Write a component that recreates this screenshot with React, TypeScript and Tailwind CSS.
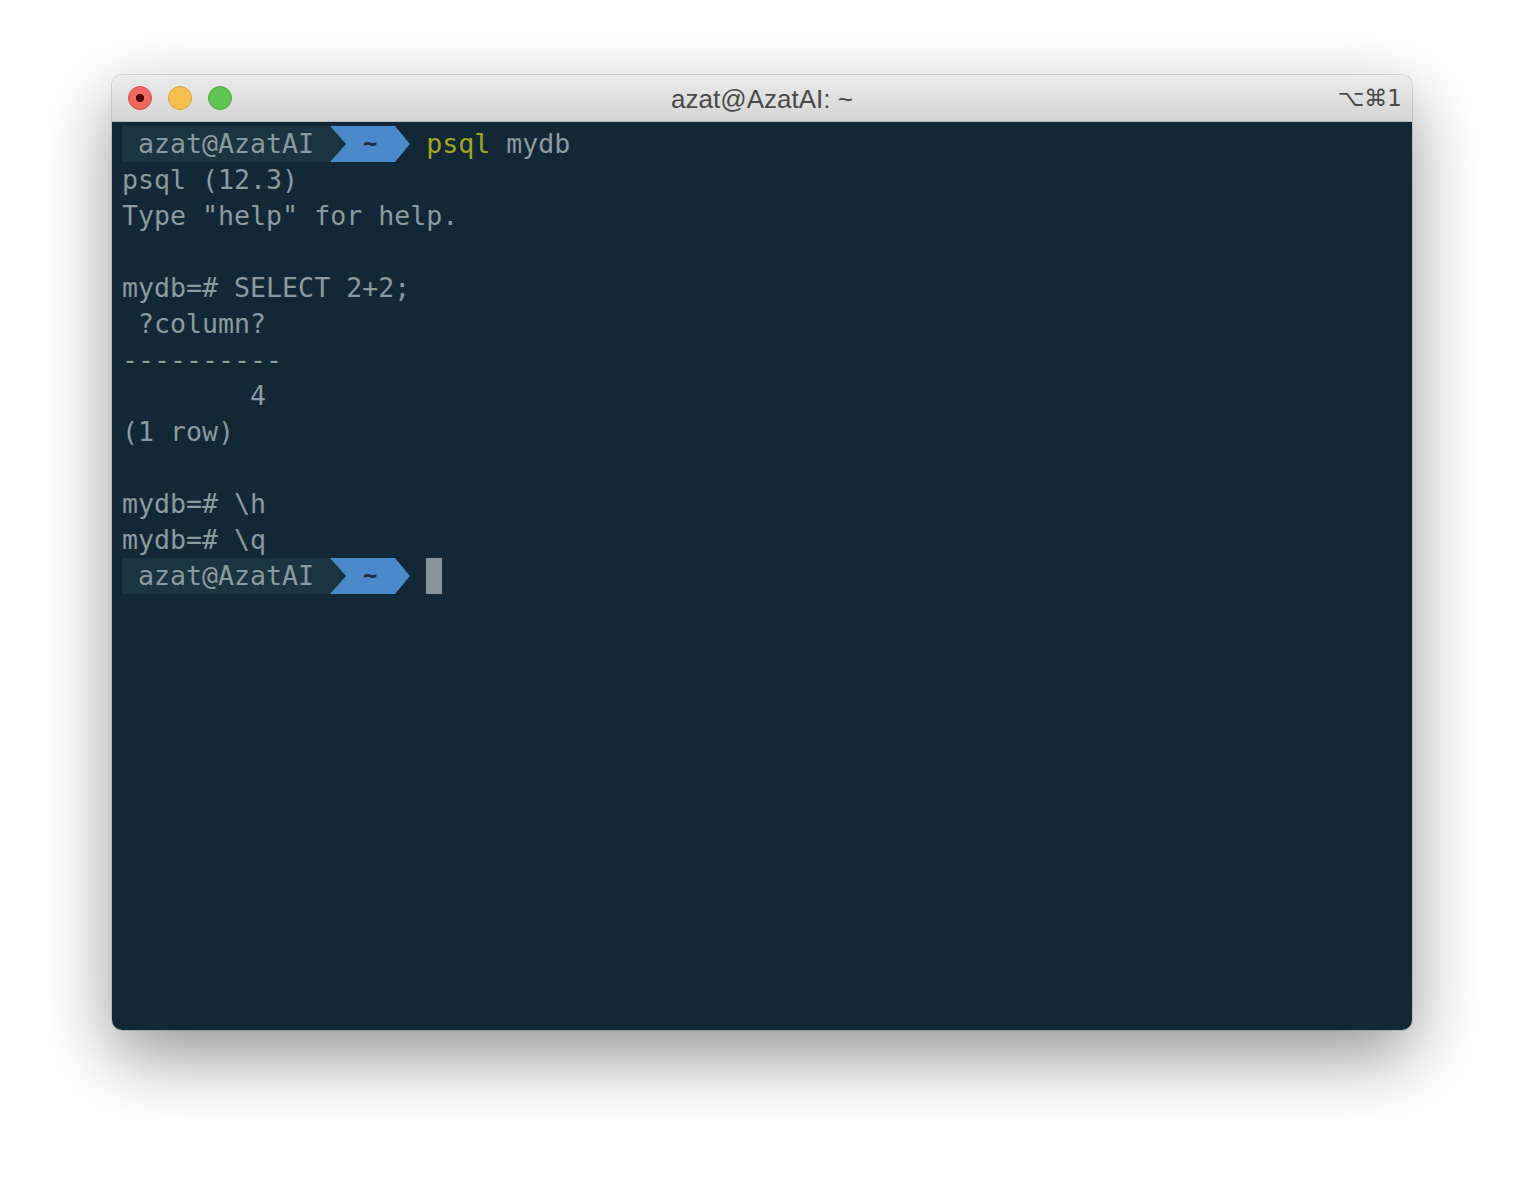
import React from "react";

const mono = { fontFamily: '"DejaVu Sans Mono", "Liberation Mono", monospace' };

function Prompt({ children }: { children?: React.ReactNode }) {
  return (
    <div className="flex h-[36px] items-center">
      <div className="flex h-[36px] items-center bg-[#1b3442] whitespace-pre text-[#8b9a9e]">{" azat@AzatAI "}</div>
      <div className="relative h-[36px] w-[80px]">
        <svg width="80" height="36" viewBox="0 0 80 36" className="absolute left-0 top-0">
          <polygon points="0,0 16,18 0,36" fill="#1b3442" />
          <polygon points="0,0 65,0 80,18 65,36 0,36 16,18" fill="#4a8acb" />
        </svg>
        <span className="absolute left-0 top-0 flex h-[36px] w-[80px] items-center justify-center text-[24px] font-bold text-[#163040]">~</span>
      </div>
      <div className="whitespace-pre">{" "}</div>
      {children}
    </div>
  );
}

function Line({ children }: { children: React.ReactNode }) {
  return <div className="h-[36px] leading-[36px] whitespace-pre">{children}</div>;
}

export default function App() {
  return (
    <div className="flex h-[1178px] w-[1524px] items-start justify-center bg-white pt-[75px]">
      <div className="flex h-[955px] w-[1300px] flex-col overflow-hidden rounded-[10px] shadow-[0_26px_70px_rgba(0,0,0,0.42),0_0_0_1px_rgba(0,0,0,0.12)]">
        <div className="relative flex h-[47px] shrink-0 items-center border-b border-[#b9b9b9] bg-gradient-to-b from-[#ebebeb] to-[#d5d5d5]">
          <div className="flex items-center gap-[16px] pl-[16px]">
            <div className="flex h-[24px] w-[24px] items-center justify-center rounded-full border border-[#dc4b42] bg-[#ee6a5f]">
              <div className="h-[8px] w-[8px] rounded-full bg-[#4d0000]" />
            </div>
            <div className="h-[24px] w-[24px] rounded-full border border-[#dea236] bg-[#f5be4f]" />
            <div className="h-[24px] w-[24px] rounded-full border border-[#4fa83f] bg-[#61c454]" />
          </div>
          <div
            className="absolute inset-0 flex items-center justify-center pt-[2px] text-[26px] text-[#4a4a4a]"
            style={{ fontFamily: '"Liberation Sans", Arial, sans-serif' }}
          >
            azat@AzatAI: ~
          </div>
          <div
            className="absolute right-[10px] top-0 flex h-[47px] items-center text-[23px] text-[#4a4a4a]"
            style={{ fontFamily: '"DejaVu Sans", "Liberation Sans", sans-serif' }}
          >
            ⌥⌘1
          </div>
        </div>
        <div className="flex-1 bg-[#122836] pl-[10px] pt-[4px] text-[26.6px] leading-[36px] text-[#8b9a9e]" style={mono}>
          <Prompt>
            <span className="text-[#a3a71f]">psql</span>
            <span className="whitespace-pre"> mydb</span>
          </Prompt>
          <Line>psql (12.3)</Line>
          <Line>Type "help" for help.</Line>
          <Line> </Line>
          <Line>mydb=# SELECT 2+2;</Line>
          <Line> ?column? </Line>
          <Line>----------</Line>
          <Line>        4</Line>
          <Line>(1 row)</Line>
          <Line> </Line>
          <Line>mydb=# \h</Line>
          <Line>mydb=# \q</Line>
          <Prompt>
            <div className="h-[36px] w-[16px] bg-[#8a9397]" />
          </Prompt>
        </div>
      </div>
    </div>
  );
}
